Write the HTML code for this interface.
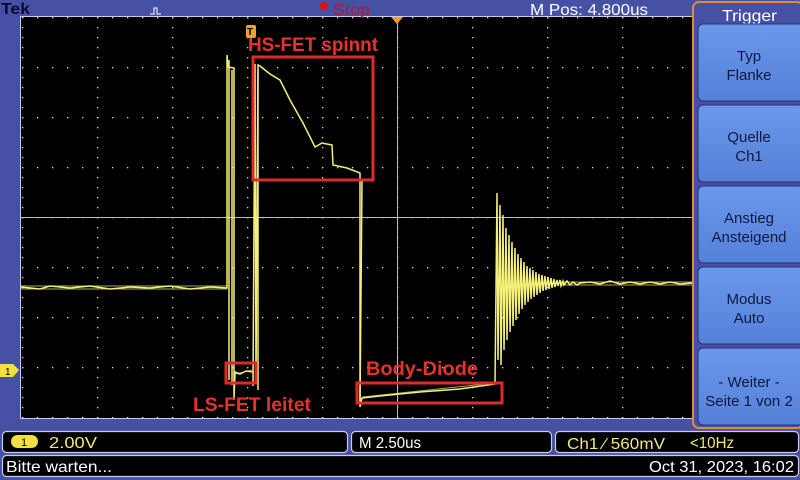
<!DOCTYPE html>
<html><head><meta charset="utf-8"><style>
html,body{margin:0;padding:0;background:#4650a4;}
svg{display:block}
text{font-family:"Liberation Sans","DejaVu Sans",sans-serif}
</style></head><body>
<svg width="800" height="480" viewBox="0 0 800 480" xmlns="http://www.w3.org/2000/svg">
<defs>
<pattern id="dh" x="22" y="17" width="15" height="50" patternUnits="userSpaceOnUse">
<rect x="0" y="0" width="1.3" height="1.3" fill="#e0e0e0"/></pattern>
<pattern id="dv" x="22" y="17" width="75" height="10" patternUnits="userSpaceOnUse">
<rect x="0" y="0" width="1.3" height="1.3" fill="#e0e0e0"/></pattern>
<linearGradient id="btn" x1="0" y1="0" x2="0" y2="1"><stop offset="0" stop-color="#6a98ea"/><stop offset="1" stop-color="#5580d8"/></linearGradient>
</defs>
<rect width="800" height="480" fill="#4650a4"/>
<rect x="20" y="16" width="674" height="403" fill="#c8ccec"/>
<rect x="21" y="17" width="672" height="401" fill="#000"/>
<rect x="21" y="17" width="672" height="401" fill="url(#dh)"/>
<rect x="21" y="17" width="672" height="401" fill="url(#dv)"/>
<line x1="21" y1="217.5" x2="693" y2="217.5" stroke="#bcbcbc" stroke-width="1"/>
<line x1="397.5" y1="17" x2="397.5" y2="418" stroke="#bcbcbc" stroke-width="1"/>
<g fill="none" stroke="#f4f07a" stroke-width="1.5">
<path d="M21,287 L40,289 L50,286 L70,288 L90,286 L110,289 L130,287 L150,288 L170,286 L190,289 L210,287 L227,288 L227,55 L228,67 L234,68 L234,400 L235,372 L240,374 L246,371 L253,372 L253,386 L254,222 L255,64 L256,380 L257,220 L258,65 L260,66 L270,74 L280,80 L290,100 L303,123 L315,147 L322,143 L332,145 L333,165 L347,168 L360,173 L360,407 L362,398 L380,396 L420,392 L460,389 L495,384 L497,193
L498,360 L500,205 L501,365 L503,215 L504,350 L506,228 L507,340 L509,235 L510,332 L512,242 L513,326 L515,248 L516,320 L518,254 L519,314 L521,258 L522,309 L524,262 L525,305 L527,266 L528,302 L530,268 L531,299 L533,270 L534,297 L536,272 L537,295 L539,274 L540,293 L542,275 L543,291 L545,276 L546,290 L548,277 L549,289 L551,278 L552,288 L554,279 L555,287 L557,280 L558,286 L560,280 L561,286 L563,281 L564,285 L567,281 L570,285 L573,282 L577,285 L580,283 L590,282 L600,284 L610,281 L620,284 L630,282 L640,284 L650,282 L660,284 L670,282 L680,284 L692,283"/>
<path d="M229,380 L229,60 M232,385 L232,70 M258,390 L258,70 M360,405 L362,180"/>
</g>
<path d="M21,286 L227,286 M21,289 L227,289 M560,282 L692,282 M560,285 L692,285 M362,397 L495,383 M236,374 L252,370" stroke="#f4f07a" stroke-width="1" opacity="0.7"/>
<g fill="none" stroke="#e02a2a" stroke-width="3">
<rect x="253" y="57" width="120" height="123"/>
<rect x="226" y="363" width="30" height="20"/>
<rect x="357" y="383" width="145" height="20"/>
</g>
<g fill="#e8312f" font-weight="bold" font-size="19">
<text x="248" y="51" textLength="130" lengthAdjust="spacingAndGlyphs">HS-FET spinnt</text>
<text x="193" y="411" textLength="118" lengthAdjust="spacingAndGlyphs">LS-FET leitet</text>
<text x="366" y="375" textLength="112" lengthAdjust="spacingAndGlyphs">Body-Diode</text>
</g>
<rect x="246" y="25" width="10" height="13" rx="2" fill="#f0a030"/>
<text x="247" y="35" font-size="10" font-weight="bold" fill="#000">T</text>
<polygon points="391,17 403,17 397,24" fill="#f0a030"/>
<path d="M0,364 L13,364 L19,370 L13,377 L0,377 Z" fill="#f0e040"/>
<text x="5" y="375" font-size="10" fill="#000">1</text>
<text x="1" y="14" font-size="16" font-weight="bold" fill="#0a0a30" textLength="29" lengthAdjust="spacingAndGlyphs">Tek</text>
<path d="M150,14 L154,14 L154,8 L157,8 L157,14 L161,14" fill="none" stroke="#fff" stroke-width="1"/>
<circle cx="324" cy="6" r="4" fill="#e01010"/>
<text x="333" y="15" font-size="16" fill="#b01a2c" textLength="37" lengthAdjust="spacingAndGlyphs">Stop</text>
<text x="530" y="15" font-size="16" fill="#fff" textLength="118" lengthAdjust="spacingAndGlyphs">M Pos: 4.800us</text>
<rect x="693" y="2" width="110" height="426" rx="6" fill="#4650a4" stroke="#e08a3a" stroke-width="2"/>
<text x="722" y="21" font-size="16" fill="#fff" textLength="55" lengthAdjust="spacingAndGlyphs">Trigger</text>
<g fill="url(#btn)" stroke="#2a3070" stroke-width="1">
<rect x="698" y="24" width="106" height="77" rx="5"/>
<rect x="698" y="105" width="106" height="77" rx="5"/>
<rect x="698" y="186" width="106" height="77" rx="5"/>
<rect x="698" y="267" width="106" height="77" rx="5"/>
<rect x="698" y="348" width="106" height="77" rx="5"/>
</g>
<g font-size="15" fill="#101840" text-anchor="middle">
<text x="749" y="61">Typ</text><text x="749" y="80">Flanke</text>
<text x="749" y="142">Quelle</text><text x="749" y="161">Ch1</text>
<text x="749" y="223">Anstieg</text><text x="749" y="242">Ansteigend</text>
<text x="749" y="304">Modus</text><text x="749" y="323">Auto</text>
<text x="749" y="387">- Weiter -</text><text x="749" y="406">Seite 1 von 2</text>
</g>
<g fill="#000" stroke="#c8ccec" stroke-width="1.2">
<rect x="2.5" y="431.5" width="345" height="21" rx="4"/>
<rect x="351.5" y="431.5" width="200" height="21" rx="4"/>
<rect x="555.5" y="431.5" width="243" height="21" rx="4"/>
<rect x="2.5" y="455.5" width="796" height="21" rx="4"/>
</g>
<rect x="11" y="435" width="27" height="13" rx="6.5" fill="#f0e040"/>
<text x="21" y="446" font-size="11" fill="#000">1</text>
<g font-size="16">
<text x="49" y="448" fill="#f0e87a" textLength="48" lengthAdjust="spacingAndGlyphs">2.00V</text>
<text x="359" y="448" fill="#fff" textLength="62" lengthAdjust="spacingAndGlyphs">M 2.50us</text>
<text x="567" y="449" fill="#f0e87a" textLength="98" lengthAdjust="spacingAndGlyphs">Ch1 ⁄ 560mV</text>
<text x="690" y="448" fill="#f0e87a" textLength="44" lengthAdjust="spacingAndGlyphs">&lt;10Hz</text>
<text x="6" y="472" fill="#fff" textLength="106" lengthAdjust="spacingAndGlyphs">Bitte warten...</text>
<text x="649" y="472" fill="#fff" textLength="145" lengthAdjust="spacingAndGlyphs">Oct 31, 2023, 16:02</text>
</g>
</svg>
</body></html>
